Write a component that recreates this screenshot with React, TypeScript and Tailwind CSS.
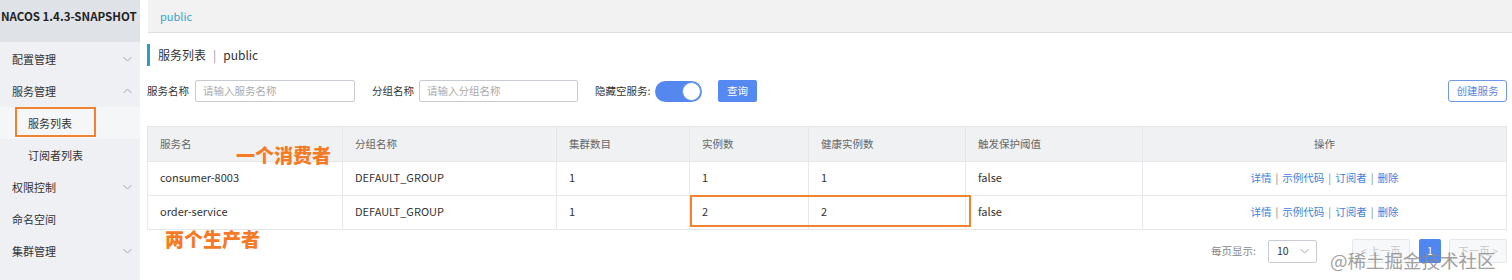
import React from "react";

const font = { fontFamily: '"Noto Sans CJK SC", "Noto Sans", sans-serif' };

function Chevron({ up = false }: { up?: boolean }) {
  return (
    <svg width="9" height="6" viewBox="0 0 9 6" className="text-[#a0a4aa]">
      {up ? (
        <path d="M0.5 5 L4.5 1 L8.5 5" fill="none" stroke="currentColor" strokeWidth="1" />
      ) : (
        <path d="M0.5 1 L4.5 5 L8.5 1" fill="none" stroke="currentColor" strokeWidth="1" />
      )}
    </svg>
  );
}

function Sidebar() {
  const item = "h-[32px] flex items-center justify-between pl-[12px] pr-[8px] text-[11px] text-[#333]";
  const sub = "h-[32px] flex items-center pl-[28px] text-[11px] text-[#333]";
  return (
    <div className="w-[140px] h-[280px] shrink-0 bg-[#eef0f3] relative">
      <div className="h-[42px] bg-[#dfe3e8] overflow-hidden flex items-start pt-[8px] pl-[1px]">
        <span className="whitespace-nowrap text-[11.5px] font-bold text-[#222]">NACOS 1.4.3-SNAPSHOT</span>
      </div>
      <div className="pt-[1px]">
        <div className={item}><span>配置管理</span><Chevron /></div>
        <div className={item}><span>服务管理</span><Chevron up /></div>
        <div className={sub + " bg-[#f5f6f8]"}><span>服务列表</span></div>
        <div className={sub}><span>订阅者列表</span></div>
        <div className={item}><span>权限控制</span><Chevron /></div>
        <div className={item}><span>命名空间</span></div>
        <div className={item}><span>集群管理</span><Chevron /></div>
      </div>
      <div className="absolute left-[15px] top-[107px] w-[81px] h-[30px] border-2 border-[#f0832f]" />
    </div>
  );
}

const cols = ["服务名", "分组名称", "集群数目", "实例数", "健康实例数", "触发保护阈值", "操作"];
const widths = ["w-[195px]", "w-[214px]", "w-[133px]", "w-[119px]", "w-[157px]", "w-[177px]", ""];
const rows = [
  ["consumer-8003", "DEFAULT_GROUP", "1", "1", "1", "false"],
  ["order-service", "DEFAULT_GROUP", "1", "2", "2", "false"],
];

function Ops() {
  return (
    <span className="text-[#3d7fdb] text-[10.5px]">
      详情<span className="text-[#888] mx-[4px]">|</span>示例代码<span className="text-[#888] mx-[4px]">|</span>订阅者<span className="text-[#888] mx-[4px]">|</span>删除
    </span>
  );
}

function Main() {
  return (
    <div className="flex-1 min-w-0 relative">
      <div className="ml-[8px] h-[33px] bg-[#f2f2f2] border-b border-[#dedede] flex items-center pl-[12px]">
        <span className="text-[11px] text-[#34a3c8]">public</span>
      </div>
      <div className="pl-[7px] pr-[5px]">
        <div className="mt-[11px] h-[22px] border-l-[3px] border-[#2a9dc8] flex items-center pl-[8px] text-[12px] text-[#333]">
          服务列表<span className="mx-[7px] text-[#999]">|</span>public
        </div>
        <div className="mt-[14px] h-[22px] flex items-center text-[10.5px] text-[#333]">
          <span className="w-[48px]">服务名称</span>
          <div className="w-[160px] h-[22px] border border-[#c8ccd2] rounded-[2px] flex items-center pl-[7px] text-[#aaa]">请输入服务名称</div>
          <span className="ml-[17px] w-[47px]">分组名称</span>
          <div className="w-[159px] h-[22px] border border-[#c8ccd2] rounded-[2px] flex items-center pl-[7px] text-[#aaa]">请输入分组名称</div>
          <span className="ml-[17px] w-[60px] whitespace-nowrap">隐藏空服务:</span>
          <div className="w-[47px] h-[21px] rounded-full bg-[#5588ef] relative">
            <div className="absolute right-[1px] top-[1px] w-[19px] h-[19px] rounded-full bg-white border border-[#6d97ee]" />
          </div>
          <div className="ml-[16px] w-[39px] h-[22px] rounded-[2px] bg-[#5588f0] text-white flex items-center justify-center">查询</div>
          <div className="ml-auto w-[59px] h-[22px] rounded-[3px] border border-[#6f97ea] text-[#5a86e0] flex items-center justify-center">创建服务</div>
        </div>
        <table className="mt-[24px] w-full border-collapse text-[11px] text-[#333] table-fixed">
          <thead>
            <tr className="h-[35px] bg-[#eff1f3]">
              {cols.map((c, i) => (
                <th
                  key={c}
                  className={`${widths[i]} font-normal text-[10.5px] text-[#666] border border-[#e3e5e8] ${i === 6 ? "text-center" : "text-left pl-[12px]"}`}
                >
                  {c}
                </th>
              ))}
            </tr>
          </thead>
          <tbody>
            {rows.map((r) => (
              <tr key={r[0]} className="h-[34px] bg-white">
                {r.map((v, i) => (
                  <td key={i} className="border border-[#e6e8eb] pl-[12px] pb-[2px]">{v}</td>
                ))}
                <td className="border border-[#e6e8eb] text-center pb-[2px]"><Ops /></td>
              </tr>
            ))}
          </tbody>
        </table>
        <div className="mt-[9px] h-[24px] flex items-center justify-end text-[10.5px]">
          <span className="text-[#888]">每页显示:</span>
          <div className="ml-[12px] w-[49px] h-[23px] border border-[#c8ccd2] rounded-[2px] flex items-center justify-between pl-[8px] pr-[7px] text-[#333]">
            <span>10</span>
            <Chevron />
          </div>
          <div className="ml-[35px] w-[58px] h-[24px] border border-[#e5e7ea] bg-[#f7f8f9] rounded-[2px] flex items-center justify-center text-[#c8c8c8]">&lt; 上一页</div>
          <div className="ml-[9px] w-[22px] h-[24px] rounded-[2px] bg-[#4f86f0] text-white flex items-center justify-center">1</div>
          <div className="ml-[8px] w-[58px] h-[24px] border border-[#e5e7ea] bg-[#f7f8f9] rounded-[2px] flex items-center justify-center text-[#c8c8c8]">下一页 &gt;</div>
        </div>
      </div>
      <div className="absolute left-[550px] top-[195px] w-[281px] h-[32px] border-2 border-[#f0832f]" />
      <div className="absolute left-[96px] top-[141px] text-[19px] font-black text-[#f47a25]">一个消费者</div>
      <div className="absolute left-[25px] top-[225px] text-[19px] font-black text-[#f47a25]">两个生产者</div>
      <div className="absolute left-[1190px] top-[247px] text-[18.5px] text-[#8a8a8a] opacity-80 whitespace-nowrap">@稀土掘金技术社区</div>
    </div>
  );
}

export default function App() {
  return (
    <div className="w-[1512px] h-[280px] flex bg-white overflow-hidden" style={font}>
      <Sidebar />
      <Main />
    </div>
  );
}
